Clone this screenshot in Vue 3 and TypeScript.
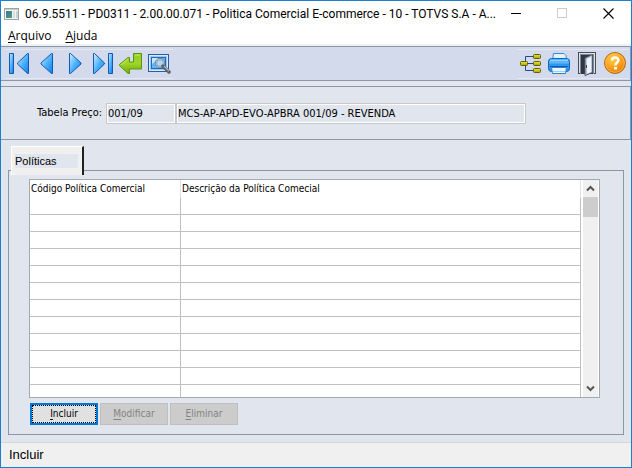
<script setup lang="ts">
import { ref } from 'vue'

interface Action {
  key: string
  rest: string
  enabled: boolean
}

const title = '06.9.5511 - PD0311 - 2.00.00.071 - Politica Comercial E-commerce - 10 - TOTVS S.A - A...'
const actions: Action[] = [
  { key: 'I', rest: 'ncluir', enabled: true },
  { key: 'M', rest: 'odificar', enabled: false },
  { key: 'E', rest: 'liminar', enabled: false },
]
const columns = ['Código Política Comercial', 'Descrição da Política Comecial']
const emptyRows = 12
const tableCode = ref('001/09')
const tableName = ref('MCS-AP-APD-EVO-APBRA 001/09 - REVENDA')
</script>

<template>
  <div class="window">
    <header class="titlebar">
      <svg class="app-icon" width="15" height="12" viewBox="0 0 15 12" aria-hidden="true">
        <defs>
          <linearGradient id="pane" x1="0" y1="0" x2="1" y2="1">
            <stop offset="0" stop-color="#3f6fa5" />
            <stop offset="1" stop-color="#4fa272" />
          </linearGradient>
        </defs>
        <rect x=".5" y=".5" width="14" height="11" fill="#f4f6f6" stroke="#9ba3a6" />
        <rect x="1" y="1" width="13" height="1" fill="#c5ccd0" />
        <rect x="2" y="3" width="6" height="7" fill="url(#pane)" />
        <rect x="9" y="3" width="2" height="7" fill="#d6dddd" />
        <rect x="12" y="3" width="2" height="7" fill="#c8d4d2" />
      </svg>
      <h1>{{ title }}</h1>
      <div class="controls">
        <button type="button" aria-label="Minimizar">
          <svg width="11" height="11" viewBox="0 0 11 11"><path d="M0 5.5h10" stroke="#000" /></svg>
        </button>
        <button type="button" aria-label="Maximizar" disabled>
          <svg width="11" height="11" viewBox="0 0 11 11"><rect x=".5" y=".5" width="9" height="9" fill="none" stroke="#ccc" /></svg>
        </button>
        <button type="button" aria-label="Fechar">
          <svg width="11" height="11" viewBox="0 0 11 11"><path d="M.5.5l10 10M10.500.5l-10 10" stroke="#000" stroke-width="1.1" /></svg>
        </button>
      </div>
    </header>

    <nav class="menu">
      <button type="button"><u>A</u>rquivo</button>
      <button type="button"><u>A</u>juda</button>
    </nav>

    <div class="toolbar">
      <svg class="defs" width="0" height="0" aria-hidden="true">
        <defs>
          <linearGradient id="blue" x1="0" y1="0" x2="1" y2="1">
            <stop offset="0" stop-color="#d5f1ff" />
            <stop offset=".5" stop-color="#4fb4fa" />
            <stop offset="1" stop-color="#0a7df0" />
          </linearGradient>
          <linearGradient id="green" x1="0" y1="0" x2="0" y2="1">
            <stop offset="0" stop-color="#8fce22" />
            <stop offset=".5" stop-color="#a0d428" />
            <stop offset="1" stop-color="#6fae10" />
          </linearGradient>
          <radialGradient id="orange" cx=".4" cy=".3" r=".7">
            <stop offset="0" stop-color="#ffd04a" />
            <stop offset=".6" stop-color="#fba01c" />
            <stop offset="1" stop-color="#e57c05" />
          </radialGradient>
          <linearGradient id="yellow" x1="0" y1="0" x2="0" y2="1">
            <stop offset="0" stop-color="#f0ec3a" />
            <stop offset="1" stop-color="#a89f00" />
          </linearGradient>
        </defs>
      </svg>
      <div class="tools">
        <button type="button" aria-label="Primeiro">
          <svg width="24" height="24" viewBox="0 0 24 24" fill="url(#blue)" stroke="#1557b5" stroke-linejoin="round">
            <rect x="2.500" y="1.500" width="4" height="20" />
            <path d="M21.500 1.500v20h-1L10.500 12v-1l10-9.500z" />
          </svg>
        </button>
        <button type="button" aria-label="Anterior">
          <svg width="24" height="24" viewBox="0 0 24 24" fill="url(#blue)" stroke="#1557b5" stroke-linejoin="round">
            <path d="M17.500 1.500v20h-1L6 12v-1l10.500-9.500z" />
          </svg>
        </button>
        <button type="button" aria-label="Próximo">
          <svg width="24" height="24" viewBox="0 0 24 24" fill="url(#blue)" stroke="#1557b5" stroke-linejoin="round">
            <path d="M6.500 1.500v20h1L18 12v-1L7.500 1.500z" />
          </svg>
        </button>
        <button type="button" aria-label="Último">
          <svg width="24" height="24" viewBox="0 0 24 24" fill="url(#blue)" stroke="#1557b5" stroke-linejoin="round">
            <rect x="17.500" y="1.500" width="4" height="20" />
            <path d="M2.500 1.500v20h1L13.500 12v-1l-10-9.500z" />
          </svg>
        </button>
        <button type="button" aria-label="Vá para">
          <svg width="24" height="24" viewBox="0 0 24 24">
            <path d="M14.500 1.500h8v15.500h-12v4.500H9L.5 13.500v-1L9 5.500h1.500v4.500h4z" fill="url(#green)" stroke="#5c9410" stroke-linejoin="round" />
            <path d="M16 3h5M2 13l7-6" stroke="#c7ef6c" fill="none" />
          </svg>
        </button>
        <button type="button" aria-label="Pesquisar">
          <svg width="24" height="24" viewBox="0 0 24 24">
            <rect x="1.500" y="2.500" width="20" height="17" fill="#8fcaff" stroke="#2b5c9f" />
            <rect x="2.500" y="3.500" width="18" height="15" fill="none" stroke="#d4ecff" />
            <rect x="4.500" y="5.500" width="14" height="11" fill="#62b5f8" stroke="#2f67a8" />
            <path d="M5 6h7l-7 6z" fill="#c6e8ff" />
            <circle cx="13" cy="11" r="4" fill="#acd7f6" stroke="#6b7689" stroke-width="2" />
            <circle cx="13" cy="11" r="4" fill="none" stroke="#ccd5df" stroke-width=".8" />
            <path d="M16 14l6 6" stroke="#5b6069" stroke-width="3.500" stroke-linecap="round" />
            <path d="M17 14l5 5" stroke="#b2b7be" stroke-width="1.200" />
          </svg>
        </button>
      </div>
      <div class="tools">
        <button type="button" aria-label="Relacionamentos">
          <svg width="24" height="24" viewBox="0 0 24 24">
            <path d="M8 11.500h7M15 4.500H6.500V18.500H15" fill="none" stroke="#25498b" />
            <g fill="url(#yellow)" stroke="#625d08">
              <rect x="1.500" y="9.500" width="7" height="4" rx="1" />
              <rect x="14.500" y="2.500" width="7" height="4" rx="1" />
              <rect x="14.500" y="9.500" width="7" height="4" rx="1" />
              <rect x="14.500" y="16.500" width="7" height="4" rx="1" />
            </g>
          </svg>
        </button>
        <button type="button" aria-label="Imprimir">
          <svg width="24" height="24" viewBox="0 0 24 24">
            <path d="M5.500 8.500l1-7h10.500l2 2 .5 5z" fill="#dff3ff" stroke="#3b8bd2" />
            <rect x="1.500" y="6.500" width="21" height="13" rx="3" fill="#2e98f4" stroke="#1563b5" />
            <path d="M3 8.500h18" stroke="#8dd0ff" stroke-width="2" />
            <path d="M2 10.500h20" stroke="#5cb6fb" stroke-width="2" />
            <path d="M3 14.500h18" stroke="#075db8" />
            <path d="M4.500 15.500h15l-1 6h-13z" fill="#e8f7ff" stroke="#3281c7" />
            <path d="M6 19.500h12" stroke="#9bd0f4" />
          </svg>
        </button>
        <button type="button" aria-label="Sair">
          <svg width="24" height="24" viewBox="0 0 24 24">
            <rect x="3.500" y=".5" width="17" height="21" fill="#dfe3e9" stroke="#474e5b" />
            <rect x="5" y="2" width="14" height="20" fill="#7c8796" />
            <rect x="6" y="3" width="12" height="19" fill="#303744" />
            <path d="M10 6l7.500-3.500v18L10 23.500z" fill="#b9c6d8" stroke="#4e5969" />
            <path d="M12 7l4-2v15l-4 1.500z" fill="#eff3f8" />
            <path d="M11.500 13v3" stroke="#39424f" />
          </svg>
        </button>
        <button type="button" aria-label="Ajuda">
          <svg width="24" height="24" viewBox="0 0 24 24">
            <circle cx="12" cy="11" r="10.500" fill="url(#orange)" stroke="#b8660a" />
            <circle cx="12" cy="11" r="9.300" fill="none" stroke="#ffc45b" stroke-width=".8" />
            <path d="M9 8.500c0-4 6.300-4 6.300-.3 0 2.300-3 2.600-3 5.300" fill="none" stroke="#fff" stroke-width="2.500" />
            <rect x="11" y="15" width="3" height="2.500" fill="#fff" />
          </svg>
        </button>
      </div>
    </div>

    <section class="filter">
      <label for="table-code">Tabela Preço:</label>
      <input id="table-code" v-model="tableCode" class="code" readonly />
      <input v-model="tableName" class="name" aria-label="Descrição da tabela" readonly />
    </section>

    <main class="content">
      <div role="tablist" class="tabs">
        <button type="button" role="tab" aria-selected="true" class="tab"><span>Políticas</span></button>
      </div>
      <section class="group">
        <div class="browser">
          <div class="grid">
            <table>
              <thead>
                <tr>
                  <th v-for="column in columns" :key="column" scope="col">{{ column }}</th>
                </tr>
              </thead>
              <tbody>
                <tr v-for="row in emptyRows" :key="row">
                  <td v-for="column in columns" :key="column"></td>
                </tr>
              </tbody>
            </table>
          </div>
          <div class="scroll">
            <button type="button" aria-label="Rolar para cima">
              <svg width="9" height="7" viewBox="0 0 9 7"><path d="M1 5.500l3.500-3.500 3.500 3.500" fill="none" stroke="#555" stroke-width="2" /></svg>
            </button>
            <div class="thumb"></div>
            <button type="button" class="down" aria-label="Rolar para baixo">
              <svg width="9" height="7" viewBox="0 0 9 7"><path d="M1 1.500l3.500 3.500 3.500-3.500" fill="none" stroke="#555" stroke-width="2" /></svg>
            </button>
          </div>
        </div>
        <div class="actions">
          <button v-for="action in actions" :key="action.key" type="button" :disabled="!action.enabled">
            <span><u>{{ action.key }}</u>{{ action.rest }}</span>
          </button>
        </div>
      </section>
    </main>

    <footer class="status">Incluir</footer>
  </div>
</template>

<style>
body {
  margin: 0;
}
</style>

<style scoped>
* {
  box-sizing: border-box;
}

button {
  margin: 0;
  padding: 0;
  border: 0;
  background: none;
  color: inherit;
  font: inherit;
}

svg {
  display: block;
}

u {
  text-underline-offset: 2px;
}

.window {
  display: flex;
  flex-direction: column;
  height: 100vh;
  border: 1px solid #1a7fd0;
  background: #e1e5ed;
  color: #000;
  font: 10px/14px "DejaVu Sans Condensed", "DejaVu Sans", sans-serif;
}

.titlebar {
  display: flex;
  align-items: center;
  flex: none;
  height: 25px;
  padding: 0 13px 0 3px;
  background: #fff;
}

.titlebar h1 {
  flex: 1;
  min-width: 0;
  margin: 0 0 0 6px;
  overflow: hidden;
  font: 12px/24px Roboto, sans-serif;
  white-space: nowrap;
}

.controls {
  display: flex;
  flex: none;
  gap: 26px;
}

.controls button {
  display: grid;
  place-items: center;
  width: 20px;
  height: 24px;
}

.menu {
  display: flex;
  flex: none;
  gap: 14px;
  height: 20px;
  padding: 0 7px;
  border-bottom: 2px solid #f0f0f0;
  background: #fff;
  font: 12px/20px "Open Sans", sans-serif;
}

.toolbar {
  display: flex;
  justify-content: space-between;
  flex: none;
  height: 35px;
  padding: 2px 1px 1px 4px;
  border: 1px solid #8c96a6;
  border-left: 0;
  background: #d2daec;
}

.defs {
  position: absolute;
}

.tools {
  display: flex;
  align-items: center;
  gap: 4px;
  height: 30px;
  padding: 0 2px;
  border-top: 1px solid #e3e8f2;
  border-bottom: 1px solid #e3e8f2;
}

.filter {
  display: flex;
  align-items: center;
  flex: none;
  height: 54px;
  margin-top: 5px;
  padding-left: 36px;
  border: 1px solid #8c96a6;
  border-left: 0;
  font-size: 11px;
}

.filter label {
  flex: none;
  width: 69px;
  white-space: nowrap;
}

.filter input {
  height: 21px;
  padding: 0 1px;
  border: 1px solid #c8c8c8;
  outline: 1px solid #fff;
  outline-offset: -2px;
  border-radius: 0;
  background: #e1e5ed;
  color: #000;
  font: inherit;
}

.filter .code {
  width: 70px;
}

.filter .name {
  width: 350px;
}

.content {
  display: flex;
  flex-direction: column;
  flex: 1;
  min-height: 0;
  padding: 6px 7px 7px;
}

.tabs {
  position: relative;
  display: flex;
  flex: none;
  margin: 0 3px -5px;
}

.tab {
  height: 29px;
  padding: 0 4px 0 3px;
  border: 1px solid #fff;
  border-right: 2px solid #202020;
  border-bottom: 0;
  background: #f0f0f0;
  font: 11px/14px "Liberation Sans", sans-serif;
}

.tab span {
  display: block;
  width: 63px;
  background: #e1e5ed;
  text-align: left;
}

.group {
  display: flex;
  flex-direction: column;
  flex: 1;
  min-height: 0;
  padding: 8px 23px 9px 20px;
  border: 1px solid #8c96a6;
}

.browser {
  display: flex;
  flex: 1;
  min-height: 0;
  border: 1px solid #a5a9b0;
  background: #fff;
}

.grid {
  flex: 1;
  min-width: 0;
  overflow: hidden;
}

table {
  width: 100%;
  table-layout: fixed;
  border-collapse: separate;
  border-spacing: 0;
}

th,
td {
  height: 17px;
  padding: 0 1px;
  border-right: 1px solid #c0c0c0;
}

th {
  height: 18px;
  border-right-color: #e0e0e0;
  font-weight: 400;
  line-height: 18px;
  text-align: left;
  white-space: nowrap;
}

td {
  border-bottom: 1px solid #c0c0c0;
}

th:first-child {
  width: 151px;
}

.scroll {
  display: flex;
  flex-direction: column;
  flex: none;
  width: 15px;
  margin: 0 1px 0 2px;
  background: #f0f0f0;
}

.scroll button {
  display: grid;
  place-items: center;
  height: 17px;
}

.scroll .down {
  margin-top: auto;
}

.thumb {
  height: 20px;
  background: #cdcdcd;
}

.actions {
  display: flex;
  flex: none;
  gap: 2px;
  margin: 5px 0 0 1px;
}

.actions button {
  width: 68px;
  height: 22px;
  padding: 0;
  border: 2px solid #0078d7;
  background: #e1e1e1;
}

.actions button:enabled {
  outline: 1px dotted #000;
  outline-offset: -3px;
}

.actions button:disabled {
  border: 1px solid #bfbfbf;
  background: #ccc;
  color: #838383;
}

.status {
  flex: none;
  height: 25px;
  padding-left: 8px;
  border-top: 1px solid #d7d7d7;
  background: #f0f0f0;
  font: 13px/23px "Liberation Sans", sans-serif;
}
</style>
